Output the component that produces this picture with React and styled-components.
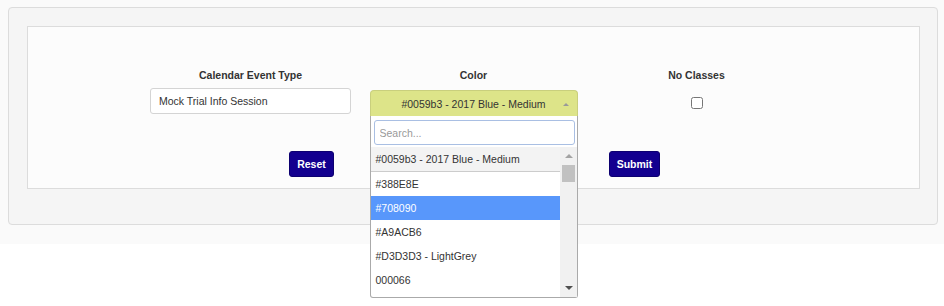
import React, { useState } from 'react';
import styled, { createGlobalStyle } from 'styled-components';

const GlobalStyle = createGlobalStyle`
  html, body {
    margin: 0;
    background: #ffffff;
  }
  body {
    font-family: 'Liberation Sans', Arial, sans-serif;
    font-size: 10.5px;
    color: #333;
  }
  #root {
    min-height: 100vh;
  }
`;

const Page = styled.div`
  background: #fafafa;
  padding: 7px 6px 19px 8px;
`;

const Well = styled.div`
  background: #f5f5f5;
  border: 1px solid #dcdcdc;
  border-radius: 4px;
  padding: 18px 17px 35px 18px;
`;

const Card = styled.div`
  background: #fcfcfc;
  border: 1px solid #dcdcdc;
  padding: 41px 0 11px;
`;

const FieldRow = styled.div`
  display: grid;
  grid-template-columns: repeat(3, 223px);
  justify-content: center;
`;

const Field = styled.div`
  display: flex;
  flex-direction: column;
  align-items: center;
`;

const Label = styled.div`
  font-weight: bold;
  font-size: 10.5px;
  line-height: 15px;
  color: #333;
  margin-bottom: 5px;
`;

const TextInput = styled.input`
  box-sizing: border-box;
  width: 201px;
  height: 26px;
  padding: 0 8px;
  border: 1px solid #d4d4d4;
  border-radius: 3px;
  background: #fff;
  font-family: inherit;
  font-size: 10.5px;
  color: #333;
  outline: none;
`;

const SelectWrap = styled.div`
  position: relative;
  width: 208px;
  margin-top: 2px;
`;

const SelectHead = styled.div`
  box-sizing: border-box;
  height: 26px;
  display: flex;
  align-items: center;
  justify-content: center;
  background: #dde489;
  border: 1px solid #c9cf7d;
  border-bottom: none;
  border-radius: 4px 4px 0 0;
  font-size: 10.5px;
  color: #333;
  position: relative;
`;

const HeadArrow = styled.span`
  position: absolute;
  right: 8px;
  top: 12px;
  width: 0;
  height: 0;
  border-left: 3px solid transparent;
  border-right: 3px solid transparent;
  border-bottom: 3px solid #999;
`;

const Dropdown = styled.div`
  position: absolute;
  top: 26px;
  left: 0;
  box-sizing: border-box;
  width: 208px;
  background: #fff;
  border: 1px solid #aaa;
  border-top: none;
  border-radius: 0 0 3px 3px;
  z-index: 10;
`;

const SearchBox = styled.input`
  box-sizing: border-box;
  display: block;
  width: 201px;
  height: 25px;
  margin: 4px 3px 2px 3px;
  padding: 0 5px;
  border: 1px solid #a9bfe3;
  border-radius: 3px;
  font-family: inherit;
  font-size: 10.5px;
  color: #333;
  outline: none;

  &::placeholder {
    color: #999;
  }
`;

const ListArea = styled.div`
  display: flex;
  height: 150px;
  overflow: hidden;
`;

const Options = styled.div`
  flex: 1;
  display: flex;
  flex-direction: column;
`;

const Option = styled.div`
  flex-shrink: 0;
  height: 24px;
  line-height: 25px;
  padding-left: 5px;
  font-size: 10.5px;
  white-space: nowrap;
  color: ${(p) => (p.$selected ? '#fff' : '#333')};
  background: ${(p) => (p.$selected ? '#5897fb' : p.$first ? '#f3f3f3' : '#fff')};
  border-bottom: ${(p) => (p.$first ? '1px solid #ccc' : 'none')};
`;

const Scrollbar = styled.div`
  width: 17px;
  background: #f1f1f1;
  position: relative;
  flex-shrink: 0;
`;

const ScrollArrow = styled.span`
  position: absolute;
  left: 5px;
  width: 0;
  height: 0;
  border-left: 4px solid transparent;
  border-right: 4px solid transparent;
  ${(p) =>
    p.$up
      ? 'top: 7px; border-bottom: 4px solid #a3a3a3;'
      : 'bottom: 7px; border-top: 4px solid #505050;'}
`;

const Thumb = styled.div`
  position: absolute;
  left: 2px;
  top: 18px;
  width: 13px;
  height: 17px;
  background: #c1c1c1;
`;

const Checkbox = styled.input`
  width: 12px;
  height: 12px;
  margin: 9px 0 0;
`;

const ButtonRow = styled.div`
  display: flex;
  justify-content: center;
  gap: 275px;
  margin-top: 35px;
  padding-left: 2px;
`;

const Button = styled.button`
  box-sizing: border-box;
  width: ${(p) => p.$w}px;
  height: 26px;
  padding: 0;
  background: #13008f;
  color: #fff;
  border: 1px solid #0d0070;
  border-radius: 3px;
  font-family: inherit;
  font-weight: bold;
  font-size: 10.5px;
  cursor: pointer;
`;

const colors = [
  '#0059b3 - 2017 Blue - Medium',
  '#388E8E',
  '#708090',
  '#A9ACB6',
  '#D3D3D3 - LightGrey',
  '000066',
];

const App = () => {
  const [eventType, setEventType] = useState('Mock Trial Info Session');
  const [search, setSearch] = useState('');

  return (
    <>
      <GlobalStyle />
      <Page>
        <Well>
          <Card>
            <FieldRow>
              <Field>
                <Label>Calendar Event Type</Label>
                <TextInput value={eventType} onChange={(e) => setEventType(e.target.value)} />
              </Field>
              <Field>
                <Label>Color</Label>
                <SelectWrap>
                  <SelectHead>
                    #0059b3 - 2017 Blue - Medium
                    <HeadArrow />
                  </SelectHead>
                  <Dropdown>
                    <SearchBox
                      placeholder="Search..."
                      value={search}
                      onChange={(e) => setSearch(e.target.value)}
                    />
                    <ListArea>
                      <Options>
                        {colors.map((c, i) => (
                          <Option key={c} $first={i === 0} $selected={c === '#708090'}>
                            {c}
                          </Option>
                        ))}
                      </Options>
                      <Scrollbar>
                        <ScrollArrow $up />
                        <Thumb />
                        <ScrollArrow />
                      </Scrollbar>
                    </ListArea>
                  </Dropdown>
                </SelectWrap>
              </Field>
              <Field>
                <Label>No Classes</Label>
                <Checkbox type="checkbox" />
              </Field>
            </FieldRow>
            <ButtonRow>
              <Button $w={45}>Reset</Button>
              <Button $w={51}>Submit</Button>
            </ButtonRow>
          </Card>
        </Well>
      </Page>
    </>
  );
};

export default App;
